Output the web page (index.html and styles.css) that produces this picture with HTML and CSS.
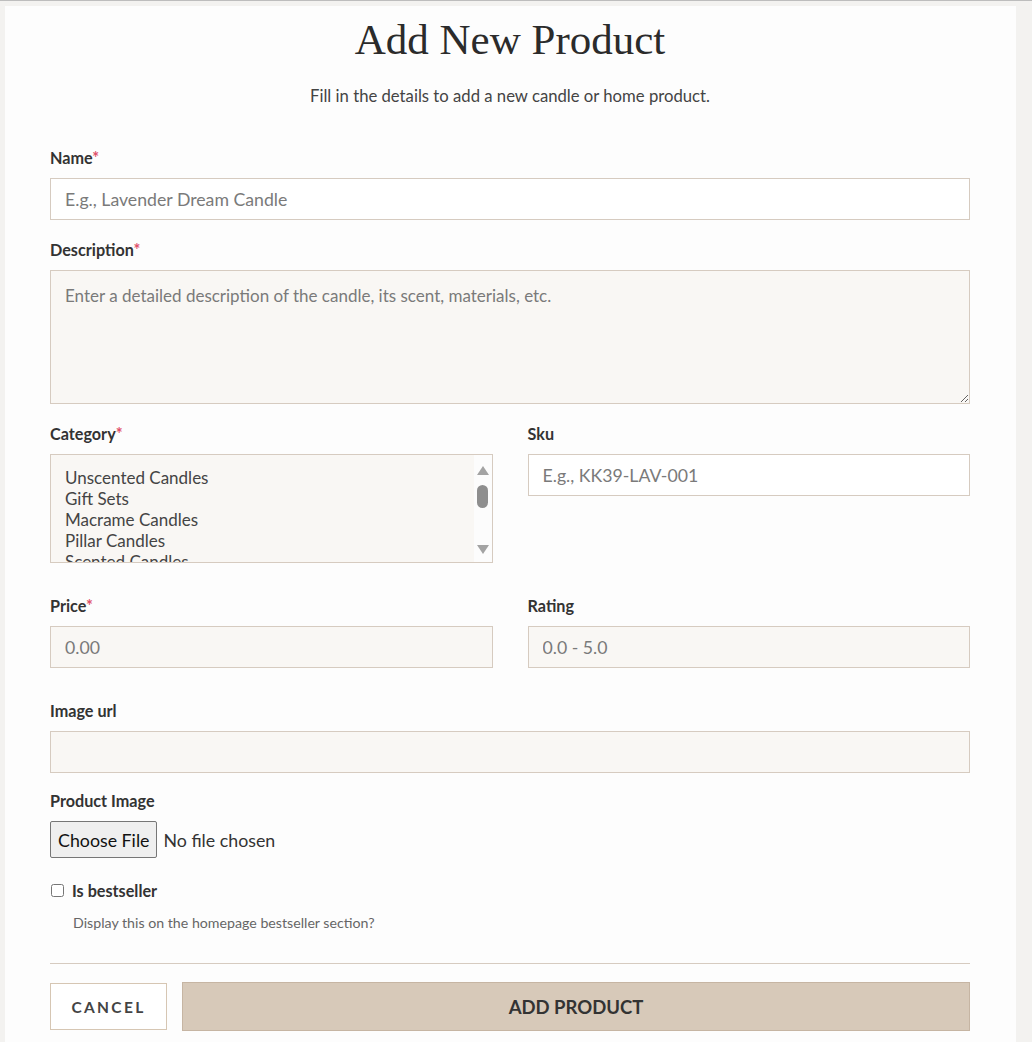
FILE: index.html
```html
<!DOCTYPE html>
<html lang="en">
<head>
<meta charset="utf-8">
<title>Add New Product</title>
<link rel="stylesheet" href="styles.css">
</head>
<body>
<div class="page">
  <main class="card">
    <h1 class="title">Add New Product</h1>
    <p class="subtitle">Fill in the details to add a new candle or home product.</p>
    <form class="form">
      <div class="group">
        <label class="label" for="name">Name<span class="req">*</span></label>
        <input class="field field-white" id="name" type="text" placeholder="E.g., Lavender Dream Candle">
      </div>
      <div class="group">
        <label class="label" for="desc">Description<span class="req">*</span></label>
        <textarea class="field area" id="desc" placeholder="Enter a detailed description of the candle, its scent, materials, etc."></textarea>
      </div>
      <div class="row">
        <div class="group">
          <label class="label" for="cat">Category<span class="req">*</span></label>
          <div class="select-wrap">
            <select class="field listbox" id="cat" multiple>
              <option>Unscented Candles</option>
              <option>Gift Sets</option>
              <option>Macrame Candles</option>
              <option>Pillar Candles</option>
              <option>Scented Candles</option>
              <option>Home Decor</option>
            </select>
            <div class="scrollbar" aria-hidden="true">
              <span class="arrow arrow-up"></span>
              <span class="thumb"></span>
              <span class="arrow arrow-down"></span>
            </div>
          </div>
        </div>
        <div class="group">
          <label class="label" for="sku">Sku</label>
          <input class="field field-white" id="sku" type="text" placeholder="E.g., KK39-LAV-001">
        </div>
      </div>
      <div class="row">
        <div class="group">
          <label class="label" for="price">Price<span class="req">*</span></label>
          <input class="field" id="price" type="text" placeholder="0.00">
        </div>
        <div class="group">
          <label class="label" for="rating">Rating</label>
          <input class="field" id="rating" type="text" placeholder="0.0 - 5.0">
        </div>
      </div>
      <div class="group group-url">
        <label class="label" for="url">Image url</label>
        <input class="field" id="url" type="text">
      </div>
      <div class="group group-file">
        <label class="label" for="img">Product Image</label>
        <input class="file" id="img" type="file">
      </div>
      <div class="check">
        <label class="check-line"><input class="checkbox" type="checkbox"><span class="check-label">Is bestseller</span></label>
        <p class="help">Display this on the homepage bestseller section?</p>
      </div>
      <div class="actions">
        <button class="btn btn-cancel" type="button">Cancel</button>
        <button class="btn btn-submit" type="submit">Add Product</button>
      </div>
    </form>
  </main>
</div>
</body>
</html>
```

FILE: styles.css
```css
* { box-sizing: border-box; }
html, body { margin: 0; padding: 0; }
body {
  background: #f3f2f0;
  border-top: 1px solid #bdbdbd;
  font-family: Lato, "Noto Sans", sans-serif;
  color: #333;
}
.page {
  padding: 5px 16px 0 5px;
}
.card {
  background: #fdfdfd;
  padding: 8px 46px 20px 45px;
}
.title {
  margin: 0;
  text-align: center;
  font-family: "Liberation Serif", "DejaVu Serif", serif;
  font-weight: 400;
  font-size: 43px;
  line-height: 52px;
  color: #2b2b2b;
}
.subtitle {
  margin: 18px 0 0;
  text-align: center;
  font-size: 16.7px;
  line-height: 24px;
  color: #444;
}
.form {
  margin-top: 40px;
}
.group {
  display: flex;
  flex-direction: column;
  margin-bottom: 20px;
}
.label {
  font-size: 16.2px;
  font-weight: 700;
  line-height: 20px;
  color: #333;
  margin-bottom: 10px;
}
.req { color: #e0506a; }
.field {
  font-family: Lato, "Noto Sans", sans-serif;
  font-size: 17.7px;
  color: #444;
  height: 42px;
  padding: 0 14px;
  border: 1px solid #d6cbc0;
  border-radius: 0;
  background: #f9f7f4;
  outline: none;
}
.field::placeholder { color: #7a7a7a; }
.field-white { background: #fff; }
.area {
  height: 134px;
  padding: 14px;
  resize: vertical;
  font-size: 17px;
  line-height: 22px;
}
.select-wrap {
  position: relative;
  display: flex;
  flex-direction: column;
}
.listbox {
  height: 109px;
  padding: 12px 0 0 14px;
  font-size: 17px;
  color: #444;
  overflow: hidden;
}
.listbox option { padding: 0; line-height: 21px; }
.scrollbar {
  position: absolute;
  top: 1px;
  right: 1px;
  bottom: 1px;
  width: 18px;
  background: #fcfcfc;
  display: flex;
  flex-direction: column;
  align-items: center;
  padding: 11px 0 8px;
}
.arrow {
  width: 0;
  height: 0;
  border-left: 6px solid transparent;
  border-right: 6px solid transparent;
}
.arrow-up { border-bottom: 9px solid #a3a3a3; }
.arrow-down { border-top: 9px solid #a3a3a3; margin-top: auto; }
.thumb {
  width: 11px;
  height: 23px;
  margin-top: 10px;
  border-radius: 6px;
  background: #8e8e8e;
}
.row {
  display: grid;
  grid-template-columns: 1fr 1fr;
  column-gap: 35px;
  margin-bottom: 13px;
}
.group-url { margin-bottom: 18px; }
.group-file { margin-bottom: 22px; }
.file {
  font-family: Lato, "Noto Sans", sans-serif;
  font-size: 17.8px;
  color: #333;
  height: 37px;
}
.file::file-selector-button {
  font-family: Lato, "Noto Sans", sans-serif;
  font-size: 17.8px;
  height: 37px;
  padding: 0 7px;
  margin-right: 6px;
  color: #111;
  background: #efefef;
  border: 1px solid #767676;
  border-radius: 2px;
}
.check { margin-bottom: 32px; }
.check-line {
  display: flex;
  align-items: center;
  gap: 8px;
  height: 20px;
}
.checkbox {
  margin: 0 0 0 1px;
  width: 13px;
  height: 13px;
}
.check-label {
  font-size: 16.2px;
  font-weight: 700;
  color: #333;
}
.help {
  margin: 15px 0 0 23px;
  font-size: 14.2px;
  line-height: 16px;
  color: #666;
}
.actions {
  border-top: 1px solid #d6cbc0;
  padding-top: 18px;
  display: flex;
  gap: 15px;
  align-items: center;
}
.btn {
  font-family: Lato, "Noto Sans", sans-serif;
  font-weight: 700;
  text-transform: uppercase;
  cursor: pointer;
}
.btn-cancel {
  width: 117px;
  height: 47px;
  background: #fff;
  border: 1px solid #d6c6b3;
  color: #444;
  font-size: 15.5px;
  letter-spacing: 2.3px;
}
.btn-submit {
  flex: 1;
  height: 49px;
  background: #d7c9b9;
  border: 1px solid #c6b5a3;
  color: #333;
  font-size: 18.5px;
}
```
